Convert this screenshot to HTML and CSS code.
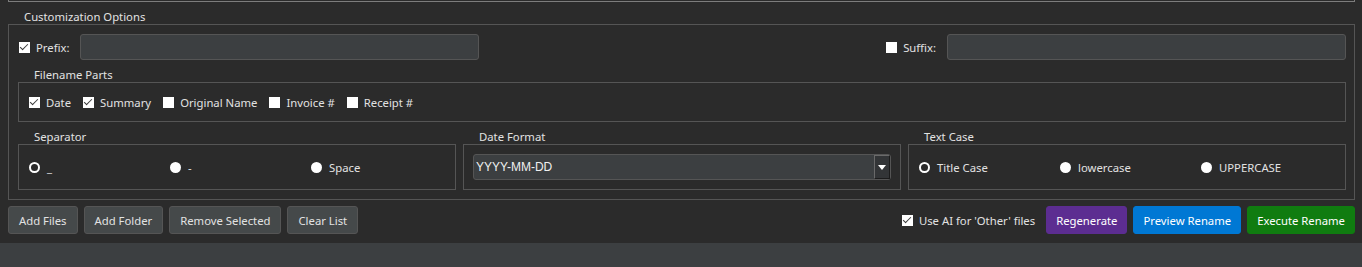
FILE: index.html
```html
<!DOCTYPE html>
<html lang="en">

<head>
    <meta charset="UTF-8">
    <meta name="viewport" content="width=device-width, initial-scale=1.0">
    <title>Renamer</title>
    <link rel="stylesheet" href="styles.css">
</head>

<body>

    <div class="prev"></div>

    <div class="panel">
        <div class="group-title">Customization Options</div>
        <div class="options">
            <div class="affix-row">
                <div class="affix">
                    <span class="cb on"></span>
                    <span class="lbl">Prefix:</span>
                    <input class="field" type="text">
                </div>
                <div class="affix">
                    <span class="cb"></span>
                    <span class="lbl">Suffix:</span>
                    <input class="field" type="text">
                </div>
            </div>

            <div class="sub-title">Filename Parts</div>
            <div class="box parts">
                <div class="check"><span class="cb on"></span>Date</div>
                <div class="check"><span class="cb on"></span>Summary</div>
                <div class="check"><span class="cb"></span>Original Name</div>
                <div class="check"><span class="cb"></span>Invoice #</div>
                <div class="check"><span class="cb"></span>Receipt #</div>
            </div>

            <div class="triple">
                <div>
                    <div class="sub-title">Separator</div>
                    <div class="box radios">
                        <div class="opt"><span class="radio on"></span>_</div>
                        <div class="opt"><span class="radio"></span>-</div>
                        <div class="opt"><span class="radio"></span>Space</div>
                    </div>
                </div>
                <div>
                    <div class="sub-title">Date Format</div>
                    <div class="box combo-box">
                        <div class="combo">
                            <span>YYYY-MM-DD</span>
                            <span class="drop"></span>
                        </div>
                    </div>
                </div>
                <div>
                    <div class="sub-title">Text Case</div>
                    <div class="box radios">
                        <div class="opt"><span class="radio on"></span>Title Case</div>
                        <div class="opt"><span class="radio"></span>lowercase</div>
                        <div class="opt"><span class="radio"></span>UPPERCASE</div>
                    </div>
                </div>
            </div>
        </div>
    </div>

    <div class="actions">
        <div class="btns">
            <button class="btn">Add Files</button>
            <button class="btn">Add Folder</button>
            <button class="btn">Remove Selected</button>
            <button class="btn">Clear List</button>
        </div>
        <div class="btns">
            <div class="check ai"><span class="cb on"></span>Use AI for 'Other' files</div>
            <button class="btn purple">Regenerate</button>
            <button class="btn blue">Preview Rename</button>
            <button class="btn green">Execute Rename</button>
        </div>
    </div>

    <div class="bottom"></div>

</body>

</html>
```

FILE: styles.css
```css
body {
    margin: 0;
    height: 267px;
    display: flex;
    flex-direction: column;
    background-color: #2b2b2b;
    color: #e2e2e2;
    font-family: "Noto Sans", sans-serif;
    font-size: 11.3px;
}

.prev {
    margin: 0 7px 0 8px;
    height: 1px;
    border: 1px solid #7d7d7d;
    border-top: none;
}

.panel {
    margin: 0 7px 0 8px;
}

.group-title {
    padding: 7px 0 0 16px;
    line-height: 15px;
}

.options {
    border: 1px solid #555;
    padding: 9px 8px 9px 9px;
}

.affix-row {
    display: flex;
    justify-content: space-between;
    height: 26px;
}

.affix {
    display: flex;
    align-items: center;
    padding-left: 1px;
}

.affix .lbl {
    margin: 0 11px 0 6px;
}

.field {
    width: 399px;
    height: 26px;
    box-sizing: border-box;
    margin: 0;
    background-color: #3c3f41;
    border: 1px solid #555;
    border-radius: 3px;
    outline: none;
}

/* checkboxes */
.cb {
    position: relative;
    flex: none;
    width: 11px;
    height: 11px;
    background-color: #fff;
}

.cb.on::after {
    content: "";
    position: absolute;
    left: 3px;
    top: 0px;
    width: 3px;
    height: 7px;
    border-right: 1.5px solid #3a3a3a;
    border-bottom: 1.5px solid #3a3a3a;
    transform: rotate(45deg);
}

.check {
    display: flex;
    align-items: center;
    gap: 6px;
}

.sub-title {
    padding: 7px 0 0 16px;
    line-height: 15px;
}

.box {
    border: 1px solid #555;
    box-sizing: border-box;
}

.parts {
    height: 40px;
    display: flex;
    align-items: center;
    gap: 12px;
    padding-left: 10px;
}

.triple {
    display: grid;
    grid-template-columns: repeat(3, 1fr);
    column-gap: 7px;
}

.radios {
    height: 46px;
    display: grid;
    grid-template-columns: repeat(3, 141px);
    align-items: center;
    padding-left: 10px;
}

.opt {
    display: flex;
    align-items: center;
    gap: 7px;
}

.radio {
    flex: none;
    width: 11px;
    height: 11px;
    box-sizing: border-box;
    border-radius: 50%;
    background-color: #fff;
}

.radio.on {
    background-color: #2b2b2b;
    border: 2.5px solid #fff;
}

.combo-box {
    height: 46px;
    display: flex;
    align-items: center;
    padding: 0 9px;
}

.combo {
    flex: 1;
    height: 26px;
    box-sizing: border-box;
    display: flex;
    align-items: center;
    justify-content: space-between;
    padding: 0 0 0 2px;
    background-color: #3c3f41;
    border: 1px solid #555;
    border-radius: 3px;
    font-family: "Liberation Sans", sans-serif;
    font-size: 12px;
    color: #f0f0f0;
}

.drop {
    position: relative;
    width: 16px;
    height: 24px;
    box-sizing: border-box;
    background-color: #333537;
    border: 1px solid #1c1c1c;
    border-left-color: #6a6a6a;
    border-top-color: #6a6a6a;
}

.drop::after {
    content: "";
    position: absolute;
    left: 3px;
    top: 9px;
    border-left: 4px solid transparent;
    border-right: 4px solid transparent;
    border-top: 5px solid #fff;
}

/* bottom buttons */
.actions {
    display: flex;
    justify-content: space-between;
    padding: 6px 7px 9px 8px;
}

.btns {
    display: flex;
    align-items: center;
    gap: 6px;
}

.btn {
    height: 28px;
    padding: 0 10px;
    background-color: #45494a;
    border: 1px solid #555;
    border-radius: 3px;
    color: #e2e2e2;
    font-family: "Noto Sans", sans-serif;
    font-size: 11.3px;
}

.ai {
    margin-right: 5px;
}

.purple,
.blue,
.green {
    padding: 0 9px;
    color: #fff;
}

.purple {
    background-color: #5c2d91;
    border-color: #5c2d91;
}

.blue {
    background-color: #0078d4;
    border-color: #0078d4;
}

.green {
    background-color: #107c10;
    border-color: #107c10;
}

.bottom {
    flex: 1;
    background-color: #3c3f41;
}
```
